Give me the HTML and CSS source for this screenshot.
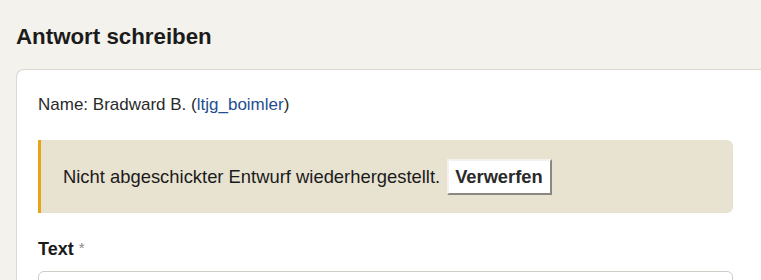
FILE: index.html
```html
<!DOCTYPE html>
<html lang="de">
<head>
<meta charset="utf-8">
<link rel="stylesheet" href="styles.css">
</head>
<body>
<main class="page">
  <h2 class="title">Antwort schreiben</h2>
  <section class="card">
    <p class="name">Name: Bradward B. (<a class="user" href="#">ltjg_boimler</a>)</p>
    <div class="notice">
      <span class="notice-text">Nicht abgeschickter Entwurf wiederhergestellt.</span>
      <button class="discard" type="button">Verwerfen</button>
    </div>
    <label class="label">Text <span class="req">*</span></label>
    <div class="input"></div>
  </section>
</main>
</body>
</html>
```
FILE: styles.css
```css
html, body {
  margin: 0;
  padding: 0;
  background: #f4f2ed;
  font-family: "Liberation Sans", Arial, sans-serif;
  color: #1b1b1b;
  overflow: hidden;
}
.page {
  padding: 0 0 0 16px;
}
.title {
  margin: 0;
  padding-top: 23px;
  font-size: 22.3px;
  line-height: 28px;
  font-weight: bold;
  color: #1b1b1b;
}
.card {
  margin-top: 18px;
  margin-right: -20px;
  background: #fff;
  border: 1px solid #dcd8d2;
  border-right: none;
  border-radius: 8px 0 0 0;
  padding: 24px 48px 0 21px;
  height: 300px;
}
.name {
  margin: 0;
  font-size: 17px;
  line-height: 22px;
  color: #2a2a2a;
}
.user {
  color: #1f4f8f;
  text-decoration: none;
}
.notice {
  margin-top: 24px;
  background: #e8e2d1;
  border-left: 3px solid #e8a317;
  border-radius: 0 6px 6px 0;
  height: 73px;
  width: 695px;
  display: flex;
  align-items: center;
  padding-left: 22px;
  box-sizing: border-box;
}
.notice-text {
  font-size: 18.4px;
  color: #1b1b1b;
}
.discard {
  margin-left: 7px;
  height: 36px;
  padding: 0 7px 0 6px;
  background: #fff;
  border: 2px solid;
  border-color: #f4f2ee #8b8882 #8b8882 #f4f2ee;
  font-family: "Liberation Sans", Arial, sans-serif;
  font-size: 18.3px;
  font-weight: bold;
  color: #2a2a2a;
}
.label {
  display: block;
  margin-top: 25px;
  font-size: 18px;
  line-height: 22px;
  font-weight: bold;
  color: #1b1b1b;
}
.req {
  color: #888;
  font-weight: normal;
  font-size: 15px;
  vertical-align: top;
  position: relative;
  top: -1px;
}
.input {
  margin-top: 11px;
  height: 60px;
  border: 1px solid #cfcbc5;
  border-radius: 6px;
}
```
